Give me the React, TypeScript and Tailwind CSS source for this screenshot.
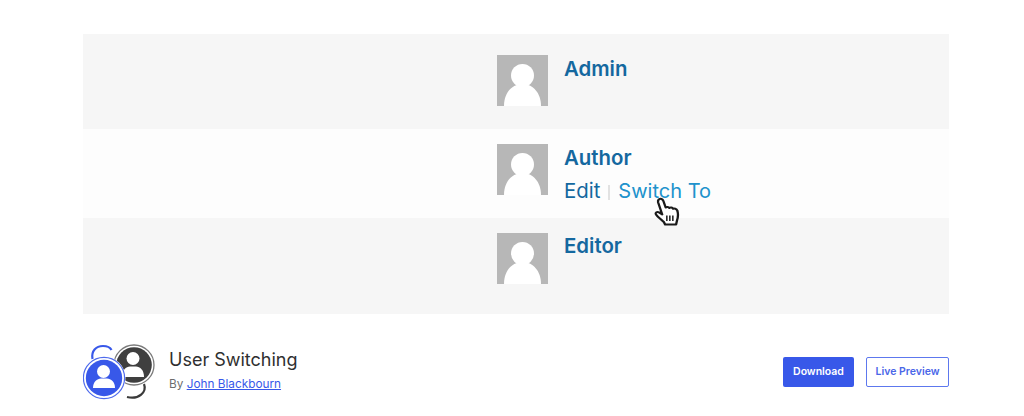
const Avatar = () => (
  <svg width="51" height="51" viewBox="0 0 51 51" className="shrink-0 block">
    <rect width="51" height="51" fill="#b7b7b7" />
    <circle cx="25.5" cy="20.5" r="11.5" fill="#fff" />
    <path d="M7 51C7 38 15 29 25.5 29S44 38 44 51Z" fill="#fff" />
  </svg>
);

const Name = ({ children }: { children: string }) => (
  <div className="text-[20.4px] leading-[27px] font-semibold text-[#14689f]">{children}</div>
);

const Logo = () => (
  <svg width="72" height="58" viewBox="0 0 72 58" className="shrink-0 block">
    <path d="M9.5 16C8 8 13 3 20 3C24 3 27 4 28.5 7" fill="none" stroke="#3858e9" strokeWidth="2.2" />
    <path d="M61 41C64 49 56 57 44 54" fill="none" stroke="#3a3a3a" strokeWidth="2.2" />
    <circle cx="51" cy="22" r="20" fill="#fff" stroke="#7a7a7a" strokeWidth="1.3" />
    <circle cx="51" cy="22" r="17.8" fill="#3f3f3f" />
    <circle cx="50" cy="15.5" r="6.5" fill="#fff" />
    <path d="M39 34C39 27 43 23.5 47 23.5H53C57 23.5 61 27 61 34Z" fill="#fff" />
    <circle cx="21" cy="35" r="21.5" fill="#fff" />
    <circle cx="21" cy="35" r="20.6" fill="none" stroke="#4f6bec" strokeWidth="1.2" />
    <circle cx="21" cy="35" r="18.2" fill="#3858e9" />
    <circle cx="20.5" cy="28.5" r="6.5" fill="#fff" />
    <path d="M10 45C10 39 14 35.5 18 35.5H24C28 35.5 32 39 32 45Z" fill="#fff" />
  </svg>
);

const Hand = () => (
  <svg width="30" height="30" viewBox="0 0 26 30" preserveAspectRatio="none" className="block">
    <path
      d="M5 2.5C6.5 1.2 8.4 2 9 4L11 10.5C11.8 9.7 13.5 9.7 14.2 11C15 10.2 16.8 10.4 17.4 11.8C18.3 11.2 20.5 11.6 21 13.4C22 16.5 21.8 20 20.8 23.5L20 27.5H10.5L9.4 25C7 22.5 3.6 19.5 2.5 17.3C1.7 15.6 3.6 14.4 5.2 15.4L8 17.5L4.4 5.2C4.2 4.2 4.4 3.2 5 2.5Z"
      fill="#fff"
      stroke="#1a1a1a"
      strokeWidth="2"
      strokeLinejoin="round"
    />
    <path d="M12 18.5V24M14.6 18.5V24M17.2 18.5V24" stroke="#1a1a1a" strokeWidth="1.3" fill="none" />
  </svg>
);

export default function App() {
  return (
    <div className="w-[1024px] h-[416px] overflow-hidden bg-white px-[83px] pt-[34px] font-['Inter',sans-serif]">
      <div className="w-[866px] flex flex-col">
        <div className="h-[95px] bg-[#f6f6f6] pl-[414px] pt-[21px] flex gap-4">
          <Avatar />
          <Name>Admin</Name>
        </div>
        <div className="h-[89px] bg-[#fdfdfd] pl-[414px] pt-[15px] flex gap-4">
          <Avatar />
          <div>
            <Name>Author</Name>
            <div className="relative mt-[6px] flex items-center text-[20.4px] leading-[28px]">
              <span className="text-[#14689f]">Edit</span>
              <span className="ml-[8px] mr-[8px] mt-[2px] w-[2px] h-[15px] bg-[#e2e2e2]" />
              <span className="text-[20px] text-[#2092cc]">Switch To</span>
              <div className="absolute left-[89px] top-[20px]">
                <Hand />
              </div>
            </div>
          </div>
        </div>
        <div className="h-[96px] bg-[#f6f6f6] pl-[414px] pt-[15px] flex gap-4">
          <Avatar />
          <div className="-mt-px">
            <Name>Editor</Name>
          </div>
        </div>
      </div>
      <div className="w-[866px] mt-[29px] flex items-start">
        <Logo />
        <div className="ml-[14px] mt-[4px]">
          <div className="text-[18px] leading-[26px] text-[#2f2f2f]">User Switching</div>
          <div className="mt-[3px] text-[11.8px] leading-[16px] text-[#6d6d6d]">
            By <span className="text-[#3858e9] underline">John Blackbourn</span>
          </div>
        </div>
        <div className="ml-auto mt-[14px] flex gap-3">
          <div className="w-[71px] h-[30px] rounded-[2px] bg-[#3858e9] text-white text-[10.5px] font-semibold flex items-center justify-center">
            Download
          </div>
          <div className="w-[83px] h-[30px] rounded-[2px] border border-[#5d78ee] bg-white text-[#4a66e8] text-[10.5px] font-semibold flex items-center justify-center">
            Live Preview
          </div>
        </div>
      </div>
    </div>
  );
}
